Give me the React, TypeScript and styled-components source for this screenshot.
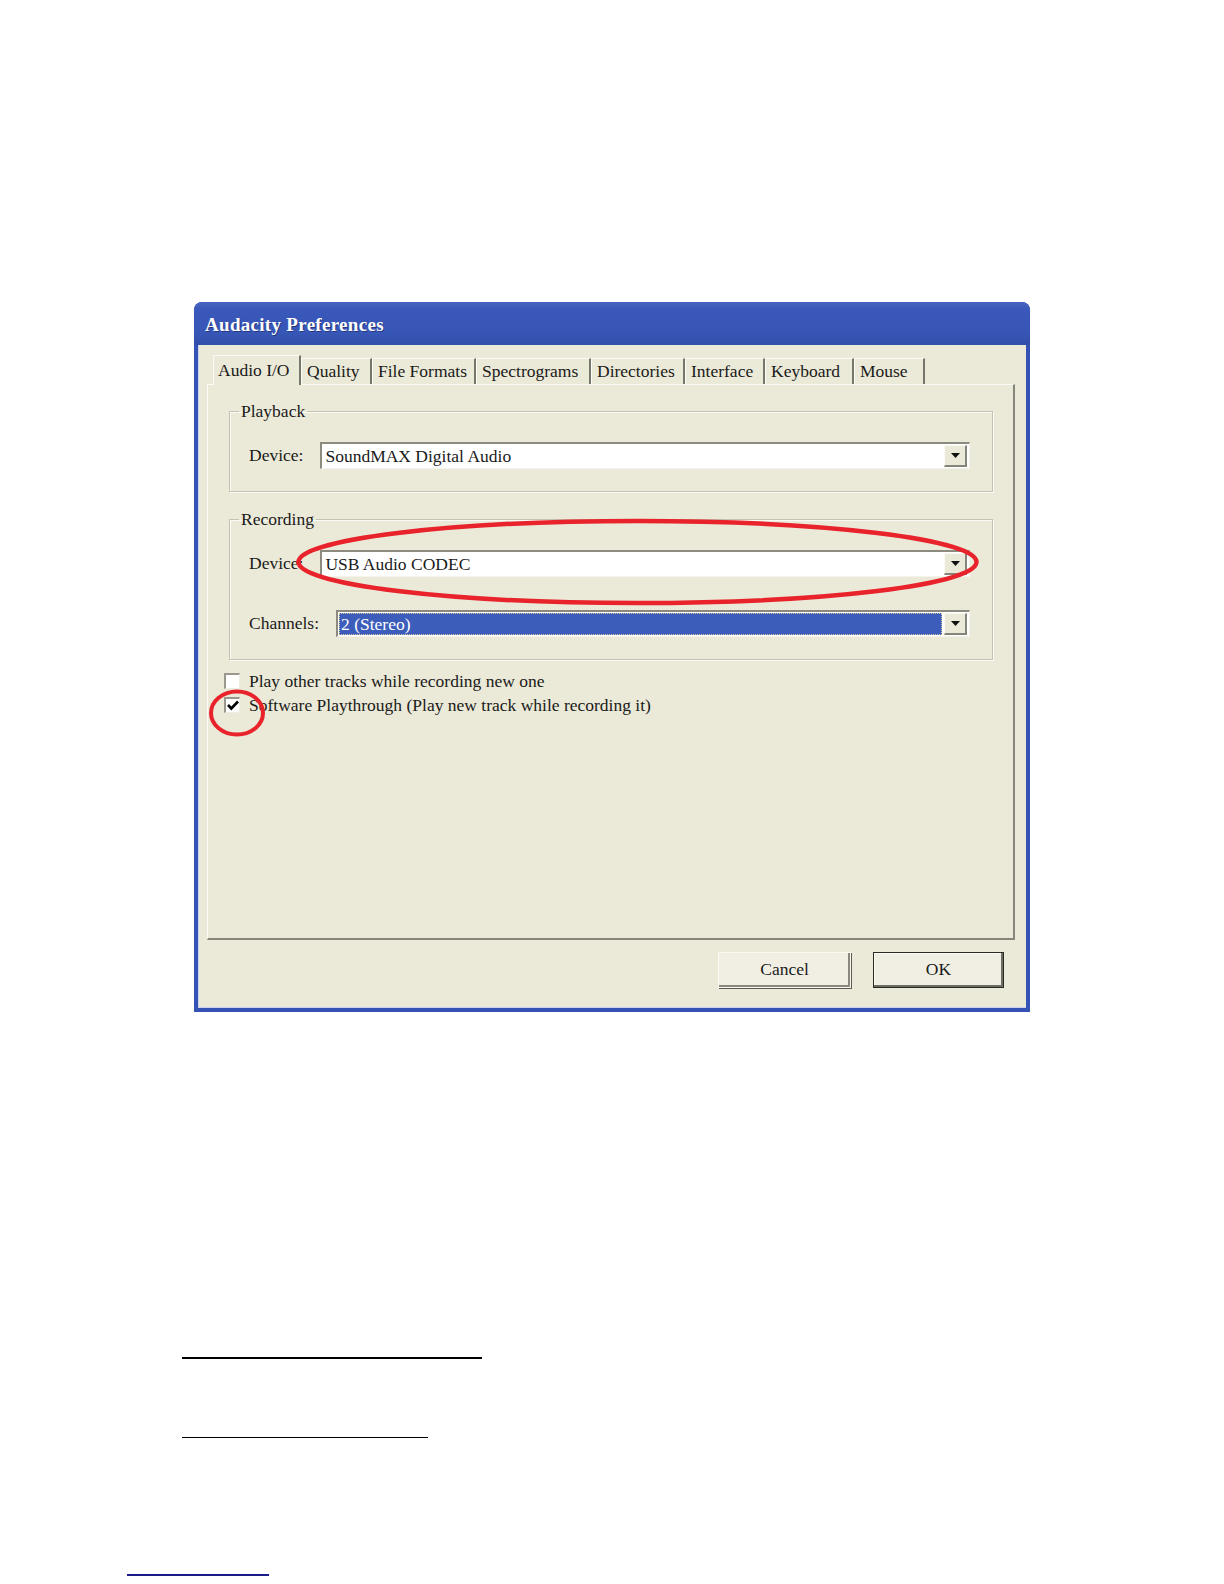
import React from "react";
import styled, { createGlobalStyle } from "styled-components";

const GlobalStyle = createGlobalStyle`
  html, body { margin: 0; padding: 0; background: #ffffff; }
  body { font-family: "Liberation Serif", "Times New Roman", serif; }
`;

const Page = styled.div`
  width: 1224px;
  min-height: 1584px;
  box-sizing: border-box;
  padding-top: 302px;
  background: #fff;
`;

const Dialog = styled.div`
  position: relative;
  width: 836px;
  height: 710px;
  box-sizing: border-box;
  margin-left: 194px;
  padding: 0 4px 4px;
  border-radius: 8px 8px 0 0;
  background: #3553b4;
  display: flex;
  flex-direction: column;
`;

const TitleBar = styled.div`
  height: 43px;
  flex: none;
  display: flex;
  align-items: center;
  padding: 3px 0 0 11px;
  box-sizing: border-box;
  margin: 0 -4px;
  border-radius: 8px 8px 0 0;
  background: linear-gradient(180deg, #4864c2 0%, #3a58b9 18%, #3856b6 70%, #314ea9 100%);
  color: #fff;
  font-family: "Liberation Serif", "Times New Roman", serif;
  font-weight: bold;
  font-size: 19px;
  letter-spacing: 0.3px;
  text-shadow: 1px 1px 0 rgba(20, 30, 80, 0.55);
`;

const Body = styled.div`
  flex: 1;
  display: flex;
  flex-direction: column;
  background: #ebe9d7;
  padding: 10px 11px 20px 9px;
  box-shadow: inset 1px 0 0 #c9d3ee, inset 0 -1px 0 #c9d3ee;
  font-size: 17.5px;
  color: #1a1a1a;
`;

const TabStrip = styled.div`
  height: 29px;
  display: flex;
  align-items: flex-end;
  padding-left: 6px;
  position: relative;
  z-index: 1;
`;

const Tab = styled.div<{ $w: number; $active?: boolean }>`
  width: ${(p) => p.$w}px;
  height: ${(p) => (p.$active ? 30 : 26)}px;
  margin-bottom: ${(p) => (p.$active ? -1 : 0)}px;
  box-sizing: border-box;
  display: flex;
  align-items: ${(p) => (p.$active ? "flex-start" : "center")};
  padding: ${(p) => (p.$active ? "4px 0 0 4px" : "0 0 0 5px")};
  background: #ebe9d7;
  border-top: 1px solid #fbfaf4;
  border-left: 1px solid #fbfaf4;
  border-right: 2px solid #77766a;
  white-space: nowrap;
`;

const Panel = styled.div`
  height: 556px;
  box-sizing: border-box;
  border-top: 1px solid #fbfaf4;
  border-left: 1px solid #fbfaf4;
  border-right: 2px solid #87867a;
  border-bottom: 2px solid #87867a;
  padding: 16px 20px 0 21px;
  display: flex;
  flex-direction: column;
`;

const Group = styled.fieldset<{ $gap?: number }>`
  margin: ${(p) => p.$gap ?? 0}px 0 0;
  padding: 21px 22px 22px 19px;
  border: 1px solid #c4c2b2;
  box-shadow: 1px 1px 0 #fbfaf4, inset 1px 1px 0 #fbfaf4;
  display: flex;
  flex-direction: column;
  gap: 33px;
  min-width: 0;
`;

const Legend = styled.legend`
  padding: 0 2px;
  margin-left: -10px;
  line-height: 20px;
  height: 20px;
`;

const Row = styled.div`
  display: flex;
  align-items: center;
  gap: 17px;
`;

const Label = styled.span`
  white-space: nowrap;
`;

const Combo = styled.div`
  flex: 1;
  height: 27px;
  box-sizing: border-box;
  display: flex;
  background: #fff;
  border-top: 2px solid #8d8b80;
  border-left: 2px solid #8d8b80;
  border-bottom: 1px solid #f4f3ec;
  border-right: 1px solid #f4f3ec;
  padding: 1px 2px 1px 1px;
`;

const ComboValue = styled.div<{ $selected?: boolean }>`
  flex: 1;
  display: flex;
  align-items: center;
  padding-left: 2px;
  margin-right: 2px;
  white-space: nowrap;
  background: ${(p) => (p.$selected ? "#3d5dbb" : "transparent")};
  color: ${(p) => (p.$selected ? "#fff" : "#1a1a1a")};
  outline: ${(p) => (p.$selected ? "1px dotted #d8c8a0" : "none")};
  outline-offset: -1px;
`;

const DropButton = styled.div`
  width: 23px;
  flex: none;
  box-sizing: border-box;
  display: flex;
  align-items: center;
  justify-content: center;
  background: #ebe9d7;
  border-top: 1px solid #fbfaf4;
  border-left: 1px solid #fbfaf4;
  border-right: 2px solid #86857a;
  border-bottom: 2px solid #86857a;
`;

const CheckList = styled.div`
  margin: 9px 0 0 -5px;
  display: flex;
  flex-direction: column;
`;

const CheckRow = styled.div`
  height: 24px;
  display: flex;
  align-items: center;
  gap: 9px;
  white-space: nowrap;
`;

const Box = styled.div`
  width: 16px;
  height: 16px;
  box-sizing: border-box;
  flex: none;
  background: #fff;
  border-top: 2px solid #9a988d;
  border-left: 2px solid #9a988d;
  border-right: 1px solid #eeede4;
  border-bottom: 1px solid #eeede4;
  display: flex;
  align-items: center;
  justify-content: center;
`;

const ButtonRow = styled.div`
  margin-top: 12px;
  display: flex;
  justify-content: flex-end;
  gap: 22px;
  padding-right: 11px;
`;

const Button = styled.div<{ $w: number; $default?: boolean }>`
  width: ${(p) => p.$w}px;
  height: 36px;
  box-sizing: border-box;
  display: flex;
  align-items: center;
  justify-content: center;
  background: #f1efe4;
  border: 1px solid ${(p) => (p.$default ? "#2a2a24" : "#f9f8f2")};
  box-shadow: ${(p) =>
    p.$default
      ? "inset -2px -2px 0 #6e6d62, inset 1px 1px 0 #fbfaf4"
      : "inset -2px -2px 0 #8a897c, 1px 1px 0 #5c5b52"};
  padding-bottom: 2px;
`;

const Annotation = styled.svg`
  position: absolute;
  left: 0;
  top: 0;
  pointer-events: none;
  overflow: visible;
`;

const Footer = styled.div`
  margin-top: 345px;
  display: flex;
  flex-direction: column;
`;

const Rule = styled.div<{ $left: number; $w: number; $h: number; $top: number; $color?: string }>`
  margin-left: ${(p) => p.$left}px;
  margin-top: ${(p) => p.$top}px;
  width: ${(p) => p.$w}px;
  height: ${(p) => p.$h}px;
  background: ${(p) => p.$color ?? "#000"};
`;

const Arrow = () => (
  <svg width="9" height="5" viewBox="0 0 9 5">
    <path d="M0 0H9L4.5 5Z" fill="#111" />
  </svg>
);

const Check = () => (
  <svg width="12" height="11" viewBox="0 0 12 11">
    <path d="M1 5L4.3 8.5L11 1.5" stroke="#000" strokeWidth="2.6" fill="none" />
  </svg>
);

const tabs: { label: string; w: number; active?: boolean }[] = [
  { label: "Audio I/O", w: 88, active: true },
  { label: "Quality", w: 71 },
  { label: "File Formats", w: 104 },
  { label: "Spectrograms", w: 115 },
  { label: "Directories", w: 94 },
  { label: "Interface", w: 80 },
  { label: "Keyboard", w: 89 },
  { label: "Mouse", w: 71 },
];

export default function App() {
  return (
    <Page>
      <GlobalStyle />
      <Dialog>
        <TitleBar>Audacity Preferences</TitleBar>
        <Body>
          <TabStrip>
            {tabs.map((t) => (
              <Tab key={t.label} $w={t.w} $active={t.active}>
                {t.label}
              </Tab>
            ))}
          </TabStrip>
          <Panel>
            <Group>
              <Legend>Playback</Legend>
              <Row>
                <Label>Device:</Label>
                <Combo>
                  <ComboValue>SoundMAX Digital Audio</ComboValue>
                  <DropButton>
                    <Arrow />
                  </DropButton>
                </Combo>
              </Row>
            </Group>
            <Group $gap={17}>
              <Legend>Recording</Legend>
              <Row>
                <Label>Device:</Label>
                <Combo>
                  <ComboValue>USB Audio CODEC</ComboValue>
                  <DropButton>
                    <Arrow />
                  </DropButton>
                </Combo>
              </Row>
              <Row>
                <Label>Channels:</Label>
                <Combo>
                  <ComboValue $selected>2 (Stereo)</ComboValue>
                  <DropButton>
                    <Arrow />
                  </DropButton>
                </Combo>
              </Row>
            </Group>
            <CheckList>
              <CheckRow>
                <Box />
                <span>Play other tracks while recording new one</span>
              </CheckRow>
              <CheckRow>
                <Box>
                  <Check />
                </Box>
                <span>Software Playthrough (Play new track while recording it)</span>
              </CheckRow>
            </CheckList>
          </Panel>
          <ButtonRow>
            <Button $w={133}>Cancel</Button>
            <Button $w={131} $default>
              OK
            </Button>
          </ButtonRow>
        </Body>
        <Annotation width="836" height="710">
          <ellipse cx="443.5" cy="260" rx="339" ry="41" fill="none" stroke="#e8232b" strokeWidth="4.5" />
          <ellipse cx="43" cy="411" rx="26" ry="21.5" fill="none" stroke="#e8232b" strokeWidth="4" />
        </Annotation>
      </Dialog>
      <Footer>
        <Rule $left={182} $w={300} $h={2} $top={0} />
        <Rule $left={182} $w={246} $h={1} $top={78} />
        <Rule $left={127} $w={142} $h={2} $top={136} $color="#1b1b8a" />
      </Footer>
    </Page>
  );
}
